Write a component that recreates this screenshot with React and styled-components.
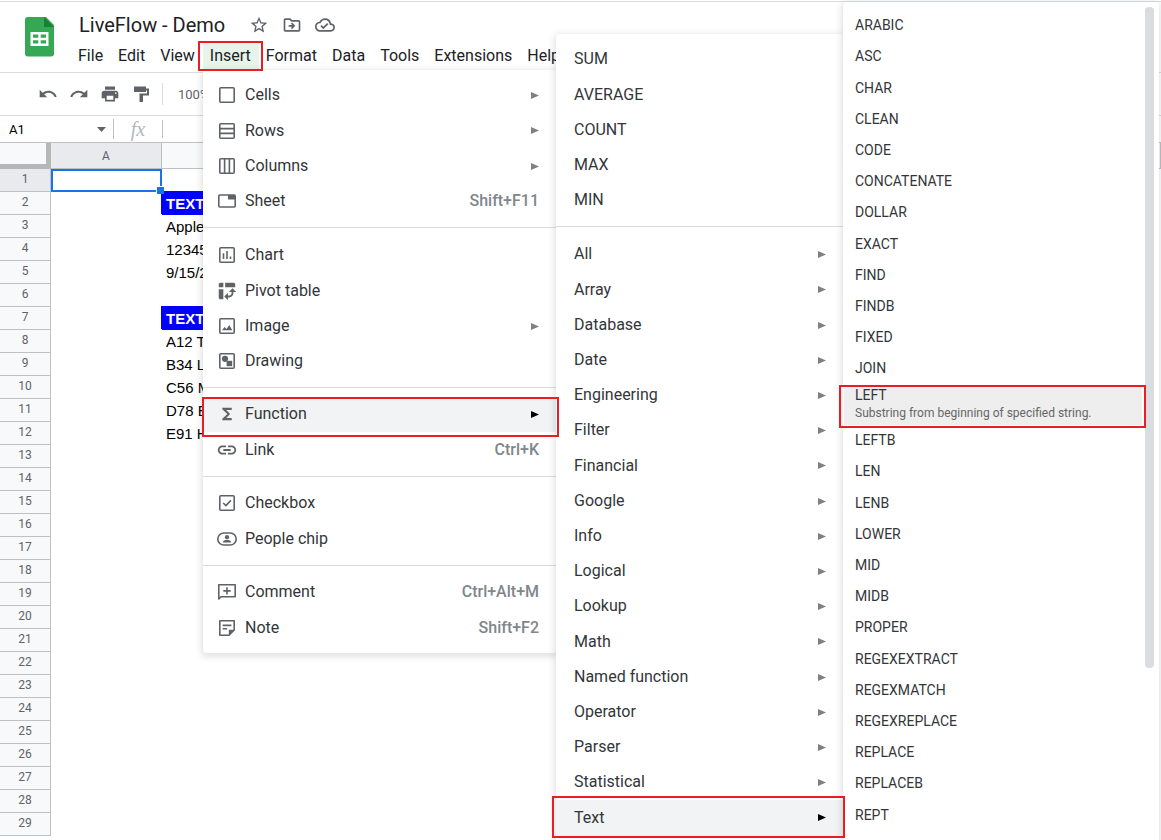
import React from "react";
import styled, { createGlobalStyle, css } from "styled-components";
import {
  MdStarBorder, MdOutlineDriveFileMove, MdOutlineCloudDone, MdUndo, MdRedo,
  MdPrint, MdPivotTableChart, MdFunctions, MdLink,
} from "react-icons/md";

const GlobalStyle = createGlobalStyle`
  *, *::before, *::after { box-sizing: border-box; }
  body { margin: 0; background: #fff; font-family: Roboto, sans-serif; color: #202124; }
  button, input { font: inherit; color: inherit; background: none; border: 0; margin: 0; padding: 0; }
  button { cursor: pointer; }
  ul { list-style: none; margin: 0; padding: 0; }
`;

const Page = styled.main`
  position: relative;
  height: 100vh;
  overflow: hidden;
  padding-top: 1px;
`;

const Header = styled.header`
  display: flex;
  gap: 18px;
  height: 72px;
  padding-left: 19px;
  border-top: 1px solid #dadce0;
  border-bottom: 1px solid #dadce0;
`;

const Logo = styled.svg`
  width: 42px;
  height: 42px;
  margin-top: 14px;
  flex: none;
`;

const HeaderBody = styled.div`
  display: flex;
  flex-direction: column;
  margin-left: -8px;
`;

const TitleRow = styled.div`
  display: flex;
  align-items: center;
  gap: 13px;
  height: 39px;
  padding: 7px 0 0 8px;
  color: #5f6368;
  svg { display: block; width: 20px; height: 20px; }
`;

const Title = styled.h1`
  margin: 0 11px 0 0;
  font-size: 20px;
  font-weight: 400;
  line-height: 28px;
  color: #202124;
`;

const MenuBar = styled.nav`
  display: flex;
`;

const MenuButton = styled.button`
  height: 30px;
  padding: 0 8px 0 7px;
  font-size: 16px;
  line-height: 30px;
  position: relative;
  background: ${(p) => (p.$open ? "#e6f4ea" : "transparent")};
`;

const frame = css`
  &::after {
    content: "";
    position: absolute;
    z-index: 2;
    border: 2px solid #ed1c24;
    inset: ${(p) => p.$frame};
    pointer-events: none;
  }
`;

const InsertButton = styled(MenuButton)`
  ${frame}
`;

const Toolbar = styled.div`
  display: flex;
  align-items: center;
  gap: 11px;
  height: 43px;
  padding-left: 38px;
  border-bottom: 1px solid #dadce0;
  color: #5f6368;
  font-size: 13px;
  svg { display: block; width: 20px; height: 20px; }
`;

const ToolDivider = styled.span`
  width: 1px;
  height: 22px;
  background: #dadce0;
`;

const ZoomButton = styled.button`
  padding-left: 4px;
`;

const FormulaBar = styled.div`
  display: flex;
  align-items: center;
  height: 27px;
  border-bottom: 1px solid #c0c0c0;
`;

const NameBox = styled.div`
  display: flex;
  align-items: center;
  width: 114px;
  height: 20px;
  padding: 0 7px 0 9px;
  border-right: 1px solid #c0c0c0;
  input { flex: 1; min-width: 0; font-size: 13px; color: #000; }
`;

const FxLabel = styled.label`
  width: 49px;
  border-right: 1px solid #c0c0c0;
  text-align: center;
  font: italic 20px/18px "Liberation Serif", serif;
  color: #b4b7ba;
`;

const FormulaInput = styled.input`
  flex: 1;
  height: 20px;
`;

const Sheet = styled.table`
  width: 100%;
  table-layout: fixed;
  border-collapse: separate;
  border-spacing: 0;
`;

const Col = styled.col`
  width: ${(p) => p.$width};
`;

const Corner = styled.td`
  height: 26px;
  padding: 0;
  background: #f8f9fa;
  border: solid #b7b7b7;
  border-width: 0 5px 5px 0;
`;

const ColHead = styled.th`
  height: 26px;
  padding: 0;
  border: solid #c0c0c0;
  border-width: 0 1px 1px 0;
  background: ${(p) => (p.$selected ? "#e8eaed" : "#f8f9fa")};
  font-size: 12px;
  font-weight: 400;
  color: #5f6368;
`;

const RowHead = styled(ColHead)`
  height: 23px;
  padding-bottom: 2px;
  line-height: 20px;
`;

const Cell = styled.td`
  height: 23px;
  padding: 0 4px;
  position: relative;
  font: ${(p) => (p.$heading ? "bold" : "normal")} 15px/22px "Liberation Sans", Arial, sans-serif;
  color: ${(p) => (p.$heading ? "#fff" : "#000")};
  white-space: nowrap;
  ${(p) => p.$heading && css`
    background: #00f;
    box-shadow: -1px -1px 0 #00f;
  `}
  ${(p) => p.$active && css`
    z-index: 1;
    border: 2px solid #1a73e8;
    &::after {
      content: "";
      position: absolute;
      right: -4px;
      bottom: -4px;
      width: 8px;
      height: 8px;
      border: 1px solid #fff;
      border-width: 1px 0 0 1px;
      background: #1a73e8;
    }
  `}
`;

const Panel = styled.section`
  position: absolute;
  padding: 8px 0 7px;
  background: #fff;
  border-radius: 4px;
  box-shadow: 0 2px 6px 2px rgba(60, 64, 67, 0.15);
`;

const InsertPanel = styled(Panel)`
  top: 70px;
  left: 203px;
  width: 354px;
`;

const FunctionPanel = styled(Panel)`
  top: 34px;
  left: 556px;
  width: 288px;
`;

const TextPanel = styled(Panel)`
  top: 2px;
  left: 843px;
  right: 2px;
  height: 860px;
`;

const Group = styled.ul`
  & + & {
    margin-top: 8px;
    padding-top: 9px;
    border-top: 1px solid #dadce0;
  }
  &:nth-child(2) { padding-top: 10px; }
`;

const Item = styled.li`
  position: relative;
  height: 35px;
  &:nth-child(5n + 2) { height: 36px; }
  background: ${(p) => (p.$active ? "#f1f3f4" : "transparent")};
  ${(p) => p.$frame && frame}
`;

const ItemButton = styled.button`
  display: flex;
  align-items: center;
  gap: 7px;
  width: 100%;
  height: 100%;
  padding: 0 18px 1px ${(p) => (p.$icon ? "13px" : "18px")};
  font-size: 16px;
  line-height: 20px;
  text-align: left;
  color: #333639;
`;

const MenuIcon = styled.span`
  width: 22px;
  height: 22px;
  color: #5f6368;
  svg { display: block; width: 22px; height: 22px; }
`;

const ItemLabel = styled.span`
  flex: 1;
`;

const Shortcut = styled.kbd`
  font: 500 16px/20px Roboto, sans-serif;
  color: #80868b;
`;

const ArrowIcon = styled.svg`
  width: 8px;
  height: 7px;
  fill: ${(p) => (p.$active ? "#000" : "#808080")};
`;

const NameItem = styled.li`
  height: 31px;
  &:nth-child(5n + 2) { height: 32px; }
`;

const NameButton = styled.button`
  width: 100%;
  height: 100%;
  padding: 0 12px 2px;
  font-size: 14px;
  line-height: 16px;
  text-align: left;
  color: #333639;
`;

const Picked = styled.div`
  position: relative;
  height: 40px;
  margin-right: 17px;
  margin-left: 1px;
  background: #eee;
  ${frame}
`;

const PickedButton = styled(NameButton)`
  display: flex;
  flex-direction: column;
  padding: 2px 11px;
  small { font-size: 12px; line-height: 20px; color: #666; }
`;

const Scrollbar = styled.div`
  position: absolute;
  top: 5px;
  right: 5px;
  width: 9px;
  height: 661px;
  border-radius: 4px;
  background: #dadce0;
`;

const Draw = ({ children }) => (
  <svg viewBox="0 0 22 22" fill="none" stroke="currentColor" strokeWidth="1.6">{children}</svg>
);
const Box = () => <rect x="3.8" y="3.8" width="14.4" height="14.4" rx="1" />;

const CellsIcon = () => <Draw><Box /></Draw>;
const RowsIcon = () => <Draw><Box /><path d="M4 8.6h14M4 13.4h14" /></Draw>;
const ColumnsIcon = () => <Draw><Box /><path d="M8.6 4v14M13.4 4v14" /></Draw>;
const SheetIcon = () => (
  <Draw><rect x="2.8" y="5" width="16.4" height="12" rx="1" /><path d="M12 5h7v4.5h-7z" fill="currentColor" stroke="none" /></Draw>
);
const ChartIcon = () => <Draw><Box /><path d="M7.5 9.2V15M11 7v8M14.5 12.4V15" /></Draw>;
const ImageIcon = () => (
  <Draw><Box /><path d="M6 15.3l2.6-3.4 1.9 2 2.8-3.8 3 5.2z" fill="currentColor" stroke="none" /></Draw>
);
const DrawingIcon = () => (
  <Draw><Box /><g fill="currentColor" stroke="none"><circle cx="9" cy="8.8" r="3.1" /><path d="M10.6 10.8h5.6v5.4h-5.6z" /></g></Draw>
);
const CheckIcon = () => <Draw><Box /><path d="M7.2 11l2.7 2.6 5-5.2" /></Draw>;
const PeopleIcon = () => (
  <Draw>
    <rect x="1.8" y="5" width="18.4" height="12" rx="6" />
    <g fill="currentColor" stroke="none"><circle cx="11" cy="9.2" r="2.1" /><path d="M6.8 14.6c0-2 2.2-2.8 4.2-2.8s4.2.8 4.2 2.8z" /></g>
  </Draw>
);
const CommentIcon = () => (
  <Draw><path d="M2.8 18V3.8h16.4v12H5z" strokeLinejoin="round" /><path d="M11 6.2v7.4M7.3 9.9h7.4" /></Draw>
);
const NoteIcon = () => (
  <Draw>
    <path d="M13 18.2H3.8V3.8h14.4V13z" strokeLinejoin="round" />
    <path d="M12.8 18.5v-5.7h5.7z" fill="currentColor" stroke="none" />
    <path d="M6.6 8.4h8.8M6.6 11.8h4.6" />
  </Draw>
);
const SigmaIcon = () => <MdFunctions viewBox="-2 -2 28 28" />;
const RollerIcon = () => (
  <svg viewBox="0 0 20 20" fill="currentColor"><path d="M3 2.5h12v2h3v7H12v6.5H8.5V9.5H16v-3h-1v1.5H3z" /></svg>
);
const Arrow = ({ active }) => <ArrowIcon viewBox="0 0 8 7" $active={active}><path d="M0 0l8 3.5L0 7z" /></ArrowIcon>;

const insertGroups = [
  [
    { label: "Cells", icon: CellsIcon, sub: true },
    { label: "Rows", icon: RowsIcon, sub: true },
    { label: "Columns", icon: ColumnsIcon, sub: true },
    { label: "Sheet", icon: SheetIcon, keys: "Shift+F11" },
  ],
  [
    { label: "Chart", icon: ChartIcon },
    { label: "Pivot table", icon: MdPivotTableChart },
    { label: "Image", icon: ImageIcon, sub: true },
    { label: "Drawing", icon: DrawingIcon },
  ],
  [
    { label: "Function", icon: SigmaIcon, sub: true, active: true, frame: "0 -2px -5px -1px" },
    { label: "Link", icon: MdLink, keys: "Ctrl+K" },
  ],
  [
    { label: "Checkbox", icon: CheckIcon },
    { label: "People chip", icon: PeopleIcon },
  ],
  [
    { label: "Comment", icon: CommentIcon, keys: "Ctrl+Alt+M" },
    { label: "Note", icon: NoteIcon, keys: "Shift+F2" },
  ],
];

const functionGroups = [
  ["SUM", "AVERAGE", "COUNT", "MAX", "MIN"].map((label) => ({ label })),
  [
    "All", "Array", "Database", "Date", "Engineering", "Filter", "Financial", "Google", "Info",
    "Logical", "Lookup", "Math", "Named function", "Operator", "Parser", "Statistical",
  ].map((label) => ({ label, sub: true })).concat({ label: "Text", sub: true, active: true, frame: "-4px -1px -2px -4px" }),
];

const namesBefore = [
  "ARABIC", "ASC", "CHAR", "CLEAN", "CODE", "CONCATENATE", "DOLLAR", "EXACT", "FIND", "FINDB", "FIXED", "JOIN",
];
const namesAfter = [
  "LEFTB", "LEN", "LENB", "LOWER", "MID", "MIDB", "PROPER", "REGEXEXTRACT", "REGEXMATCH",
  "REGEXREPLACE", "REPLACE", "REPLACEB", "REPT",
];

const cellText = {
  2: "TEXT", 3: "Apple", 4: "12345", 5: "9/15/2022", 7: "TEXT",
  8: "A12 T", 9: "B34 L", 10: "C56 M", 11: "D78 E", 12: "E91 H",
};

const MenuGroups = ({ groups }) =>
  groups.map((items, i) => (
    <Group key={i}>
      {items.map(({ label, icon: Icon, sub, keys, active, frame: edges }) => (
        <Item key={label} $active={active} $frame={edges}>
          <ItemButton $icon={Boolean(Icon)}>
            {Icon && <MenuIcon><Icon /></MenuIcon>}
            <ItemLabel>{label}</ItemLabel>
            {keys && <Shortcut>{keys}</Shortcut>}
            {sub && <Arrow active={active} />}
          </ItemButton>
        </Item>
      ))}
    </Group>
  ));

const NameList = ({ names }) => (
  <ul>{names.map((n) => <NameItem key={n}><NameButton>{n}</NameButton></NameItem>)}</ul>
);

export default function App() {
  return (
    <Page>
      <GlobalStyle />
      <Header>
        <Logo viewBox="0 0 42 42">
          <path d="M9 1h18l8 8v28.500a3 3 0 0 1-3 3H9a3 3 0 0 1-3-3V4a3 3 0 0 1 3-3z" fill="#34a853" />
          <path d="M25 1l10 10H25z" fill="#188038" />
          <path d="M11.500 16h18v14h-18zM14 18.500v3.200h5.300v-3.200zM21.700 18.500v3.200H27v-3.200zM14 24.300v3.200h5.300v-3.200zM21.700 24.300v3.200H27v-3.200z" fill="#fff" fillRule="evenodd" />
        </Logo>
        <HeaderBody>
          <TitleRow>
            <Title>LiveFlow - Demo</Title>
            <button aria-label="Star"><MdStarBorder /></button>
            <button aria-label="Move"><MdOutlineDriveFileMove /></button>
            <button aria-label="Saved to Drive"><MdOutlineCloudDone /></button>
          </TitleRow>
          <MenuBar>
            <MenuButton>File</MenuButton>
            <MenuButton>Edit</MenuButton>
            <MenuButton>View</MenuButton>
            <InsertButton $open $frame="0 -4px 0 -5px">Insert</InsertButton>
            <MenuButton>Format</MenuButton>
            <MenuButton>Data</MenuButton>
            <MenuButton>Tools</MenuButton>
            <MenuButton>Extensions</MenuButton>
            <MenuButton>Help</MenuButton>
          </MenuBar>
        </HeaderBody>
      </Header>
      <Toolbar>
        <button aria-label="Undo"><MdUndo /></button>
        <button aria-label="Redo"><MdRedo /></button>
        <button aria-label="Print"><MdPrint /></button>
        <button aria-label="Paint format"><RollerIcon /></button>
        <ToolDivider />
        <ZoomButton>100%</ZoomButton>
      </Toolbar>
      <FormulaBar>
        <NameBox>
          <input aria-label="Name box" defaultValue="A1" />
          <svg width="9" height="5" viewBox="0 0 9 5" fill="#5f6368"><path d="M0 0h9L4.500 5z" /></svg>
        </NameBox>
        <FxLabel htmlFor="formula">fx</FxLabel>
        <FormulaInput id="formula" />
      </FormulaBar>
      <Sheet>
        <colgroup>
          <Col $width="51px" /><Col $width="111px" /><Col $width="222px" /><Col $width="auto" />
        </colgroup>
        <thead>
          <tr><Corner /><ColHead $selected>A</ColHead><ColHead /><ColHead /></tr>
        </thead>
        <tbody>
          {Array.from({ length: 29 }, (_, i) => i + 1).map((n) => (
            <tr key={n}>
              <RowHead scope="row" $selected={n === 1}>{n}</RowHead>
              <Cell $active={n === 1} />
              <Cell $heading={cellText[n] === "TEXT"}>{cellText[n]}</Cell>
              <Cell />
            </tr>
          ))}
        </tbody>
      </Sheet>
      <InsertPanel aria-label="Insert"><MenuGroups groups={insertGroups} /></InsertPanel>
      <FunctionPanel aria-label="Function"><MenuGroups groups={functionGroups} /></FunctionPanel>
      <TextPanel aria-label="Text functions">
        <NameList names={namesBefore} />
        <Picked $frame="0 -4px -3px -5px">
          <PickedButton>
            <span>LEFT</span>
            <small>Substring from beginning of specified string.</small>
          </PickedButton>
        </Picked>
        <NameList names={namesAfter} />
        <Scrollbar />
      </TextPanel>
    </Page>
  );
}
